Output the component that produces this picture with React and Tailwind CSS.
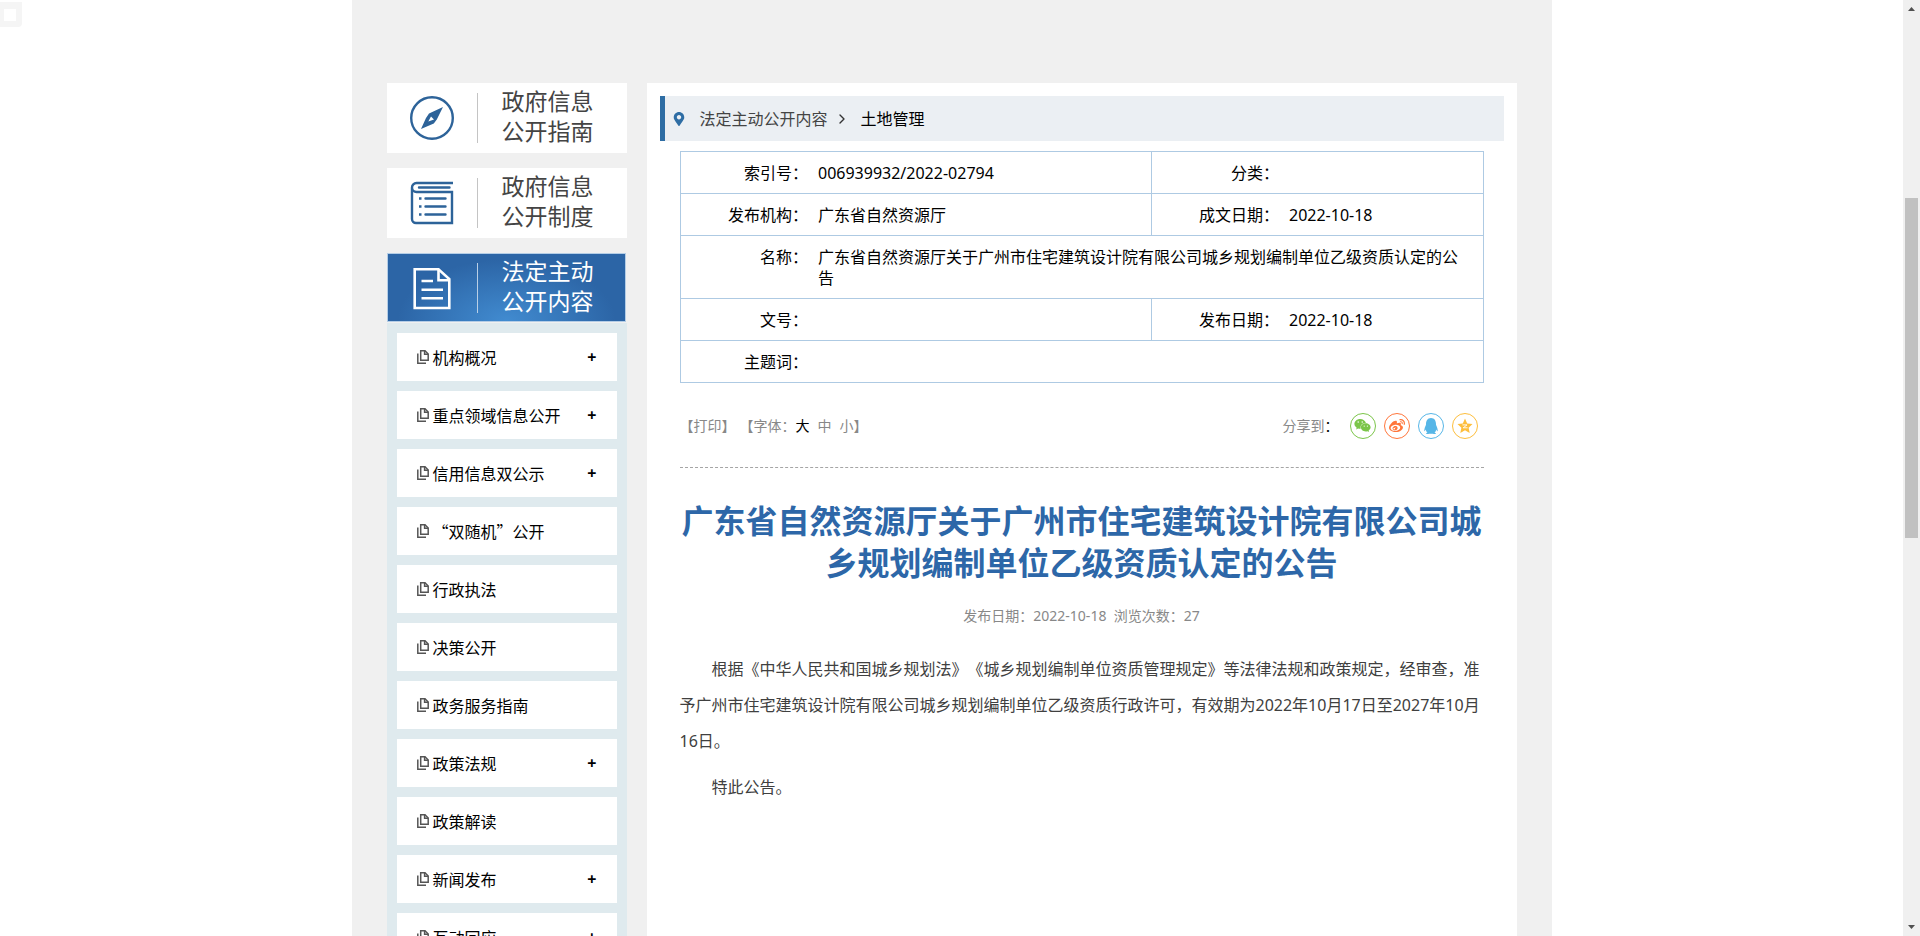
import React from 'react';
import { ChevronRight } from 'lucide-react';
import { FaMapMarkerAlt, FaQq, FaWeibo, FaWeixin } from 'react-icons/fa';

const menuItems = [
  { label: '机构概况', expandable: true },
  { label: '重点领域信息公开', expandable: true },
  { label: '信用信息双公示', expandable: true },
  { label: '“双随机”公开', expandable: false },
  { label: '行政执法', expandable: false },
  { label: '决策公开', expandable: false },
  { label: '政务服务指南', expandable: false },
  { label: '政策法规', expandable: true },
  { label: '政策解读', expandable: false },
  { label: '新闻发布', expandable: true },
  { label: '互动回应', expandable: true },
];

const CompassIcon = () => (
  <svg width="44" height="44" viewBox="0 0 44 44" fill="none">
    <circle cx="22" cy="22" r="20.8" stroke="#2d6399" strokeWidth="2.4" />
    <path
      d="M33 11L19 17.5L16 22L11 33L23.8 27.6L26.8 23.5ZM21 20.5L24 23.5L18.3 25.6Z"
      fill="#2d6399"
      fillRule="evenodd"
    />
  </svg>
);

const BookIcon = () => (
  <svg width="44" height="44" viewBox="0 0 44 44" fill="none" stroke="#2d6399" strokeWidth="2.4">
    <path d="M43 2H6.5A4.5 4.5 0 0 0 6.5 11H42V42H6A4 4 0 0 1 2 38V6.5" />
    <path d="M9 6.5H39.5M15.5 17.5H35.5M15.5 25.5H35.5M15.5 33.5H35.5" strokeLinecap="round" />
    <path d="M9 17.5H11.5M9 25.5H11.5M9 33.5H11.5" />
  </svg>
);

const DocumentIcon = () => (
  <svg width="44" height="44" viewBox="0 0 44 44" fill="none" stroke="#fff" strokeWidth="2.6">
    <path d="M4.7 3.2H28.5L39.3 13V42H4.7Z" />
    <path d="M28.5 3.2V14.2H39.3" />
    <path d="M11.5 15H23M11.5 23.7H33M11.5 32.3H33" />
  </svg>
);

const CopyIcon = () => (
  <svg width="12" height="14" viewBox="0 0 12 14" fill="none" stroke="#555" strokeWidth="1.5" className="shrink-0">
    <path d="M3.7 0.8H8L11.2 4V10.3H3.7Z" />
    <path d="M7.6 0.8V4.3H11.2" />
    <path d="M0.8 3.5V13.2H9" />
  </svg>
);

const QzoneIcon = () => (
  <svg width="16" height="16" viewBox="0 0 16 16">
    <path
      d="M8 0.5L10.2 5.4L15.5 6L11.6 9.7L12.7 15L8 12.3L3.3 15L4.4 9.7L0.5 6L5.8 5.4Z"
      fill="#fdbe3d"
    />
    <path d="M5.4 6.9H10L6.2 9.8H10.6" fill="none" stroke="#fff" strokeWidth="0.9" />
  </svg>
);

const Colon = () => <span className="text-black">：</span>;

const NavCard = ({ icon, lines }) => (
  <a href="#" className="mb-[15px] flex h-[70px] items-center bg-white text-[#444]">
    <span className="flex w-[90px] justify-center">{icon}</span>
    <span className="h-[50px] w-px bg-[#c4c4c4]" />
    <span className="ml-6 pb-1 text-[23px] leading-[30px]">
      {lines[0]}<br />{lines[1]}
    </span>
  </a>
);

const MenuItem = ({ label, expandable }) => (
  <li className="flex h-12 items-center bg-white px-5">
    <a href="#" className="flex flex-1 items-center gap-1 pb-px text-black">
      <CopyIcon />
      <span className="font-['Noto_Sans_CJK_SC',sans-serif]">{label}</span>
    </a>
    {expandable && (
      <button type="button" aria-label={`展开${label}`} className="text-base font-bold leading-6 text-black">+</button>
    )}
  </li>
);

const Sidebar = () => (
  <aside className="w-[240px] shrink-0">
    <NavCard icon={<CompassIcon />} lines={['政府信息', '公开指南']} />
    <NavCard icon={<BookIcon />} lines={['政府信息', '公开制度']} />
    <a
      href="#"
      className="mb-px mr-px flex h-[69px] items-center border border-[#b4cde6] bg-[radial-gradient(ellipse_at_50%_100%,#418bd0_0%,#2c65a6_65%)] text-white"
    >
      <span className="flex w-[89px] justify-center"><DocumentIcon /></span>
      <span className="h-[50px] w-px bg-[#b9cfe6]" />
      <span className="ml-6 pb-1 text-[23px] leading-[30px]">
        法定主动<br />公开内容
      </span>
    </a>
    <ul className="flex flex-col gap-[10px] bg-[#dfeaee] p-[10px]">
      {menuItems.map((item) => (
        <MenuItem key={item.label} {...item} />
      ))}
    </ul>
  </aside>
);

const Label = ({ children }) => (
  <th scope="row" className="border-y border-l border-[#aecae3] pb-[9px] pt-[11px] text-right align-top font-normal">
    {children}：
  </th>
);

const Value = ({ children, colSpan }) => (
  <td colSpan={colSpan} className="border-y border-r border-[#aecae3] pb-[9px] pl-[10px] pr-4 pt-[11px] align-top">
    {children}
  </td>
);

const InfoTable = () => (
  <table className="w-full table-fixed border-collapse text-base leading-[21px] text-black">
    <colgroup>
      <col className="w-[128px]" />
      <col className="w-[343px]" />
      <col className="w-[128px]" />
      <col />
    </colgroup>
    <tbody>
      <tr>
        <Label>索引号</Label>
        <Value>006939932/2022-02794</Value>
        <Label>分类</Label>
        <Value />
      </tr>
      <tr>
        <Label>发布机构</Label>
        <Value>广东省自然资源厅</Value>
        <Label>成文日期</Label>
        <Value>2022-10-18</Value>
      </tr>
      <tr>
        <Label>名称</Label>
        <Value colSpan={3}>广东省自然资源厅关于广州市住宅建筑设计院有限公司城乡规划编制单位乙级资质认定的公告</Value>
      </tr>
      <tr>
        <Label>文号</Label>
        <Value />
        <Label>发布日期</Label>
        <Value>2022-10-18</Value>
      </tr>
      <tr>
        <Label>主题词</Label>
        <Value colSpan={3} />
      </tr>
    </tbody>
  </table>
);

const Toolbar = () => (
  <div className="flex h-[85px] items-center justify-between border-b border-dashed border-[#a5a5a5] pr-[6px] pt-px text-sm text-[#888]">
    <div className="flex items-center gap-1">
      <button type="button">【打印】</button>
      <div className="flex items-center">
        <span>【字体：</span>
        <button type="button" className="text-black">大</button>
        <button type="button" className="ml-2">中</button>
        <button type="button" className="ml-2">小</button>
        <span>】</span>
      </div>
    </div>
    <div className="flex items-center gap-2">
      <span className="mr-[3px]">分享到<Colon /></span>
      <a href="#" aria-label="微信" className="flex size-[26px] items-center justify-center rounded-full border border-[#7bc549] text-[#7bc549]">
        <FaWeixin size={17} />
      </a>
      <a href="#" aria-label="微博" className="flex size-[26px] items-center justify-center rounded-full border border-[#ff763b] text-[#ff763b]">
        <FaWeibo size={16} />
      </a>
      <a href="#" aria-label="QQ" className="flex size-[26px] items-center justify-center rounded-full border border-[#56b6e7] text-[#56b6e7]">
        <FaQq size={16} />
      </a>
      <a href="#" aria-label="QQ空间" className="flex size-[26px] items-center justify-center rounded-full border border-[#fdbe3d]">
        <QzoneIcon />
      </a>
    </div>
  </div>
);

const Article = () => (
  <article>
    <h1 className="mt-8 text-center text-[32px] font-bold leading-[42px] text-[#2d67a8]">
      广东省自然资源厅关于广州市住宅建筑设计院有限公司城乡规划编制单位乙级资质认定的公告
    </h1>
    <p className="mt-5 text-center text-sm leading-6 text-[#888]">
      发布日期：2022-10-18&nbsp; 浏览次数：27
    </p>
    <div className="mt-[23px] space-y-[10px] text-base leading-9 text-[#404040]">
      <p className="indent-8">
        根据《中华人民共和国城乡规划法》《城乡规划编制单位资质管理规定》等法律法规和政策规定，经审查，准予广州市住宅建筑设计院有限公司城乡规划编制单位乙级资质行政许可，有效期为2022年10月17日至2027年10月16日。
      </p>
      <p className="indent-8">特此公告。</p>
    </div>
  </article>
);

const Scrollbar = () => (
  <div className="flex w-[17px] shrink-0 flex-col items-center justify-between bg-[#f0f0f0] py-[6px]">
    <svg width="7" height="6" viewBox="0 0 7 6"><path d="M0 5L3.5 1L7 5Z" fill="#505050" /></svg>
    <div className="flex w-[13px] flex-1 flex-col">
      <div className="grow-[186]" />
      <div className="grow-[340] bg-[#c1c1c1]" />
      <div className="grow-[386]" />
    </div>
    <svg width="7" height="6" viewBox="0 0 7 6"><path d="M0 1L3.5 5L7 1Z" fill="#505050" /></svg>
  </div>
);

const App = () => {
  return (
    <div
      lang="zh-CN"
      className="relative flex h-screen overflow-hidden bg-white font-['Noto_Sans','Noto_Sans_CJK_SC',sans-serif] [text-spacing-trim:space-all]"
    >
      <div className="absolute left-0 top-[2px] flex h-[25px] w-[22px] items-center rounded-br bg-[#f5f5f5] pl-1">
        <span className="size-3 bg-white" />
      </div>

      <div className="flex min-w-0 flex-1 justify-center">
        <div className="flex w-full max-w-[1200px] gap-5 bg-[#f0f0f0] px-[35px] pt-[83px]">
          <Sidebar />
          <main className="min-w-0 flex-1 bg-white p-[13px]">
            <nav className="flex h-[45px] items-center border-l-[5px] border-[#2e6da4] bg-[#ebeff3] pl-[7px] text-base">
              <FaMapMarkerAlt size={14} className="text-[#2e6da4]" />
              <a href="#" className="ml-[14px] text-[#444]">法定主动公开内容</a>
              <ChevronRight size={16} className="mx-[6px] text-[#333]" />
              <a href="#" className="ml-[5px] text-black">土地管理</a>
            </nav>
            <div className="mt-[10px] px-5">
              <InfoTable />
              <Toolbar />
              <Article />
            </div>
          </main>
        </div>
      </div>

      <Scrollbar />
    </div>
  );
};

export default App;
